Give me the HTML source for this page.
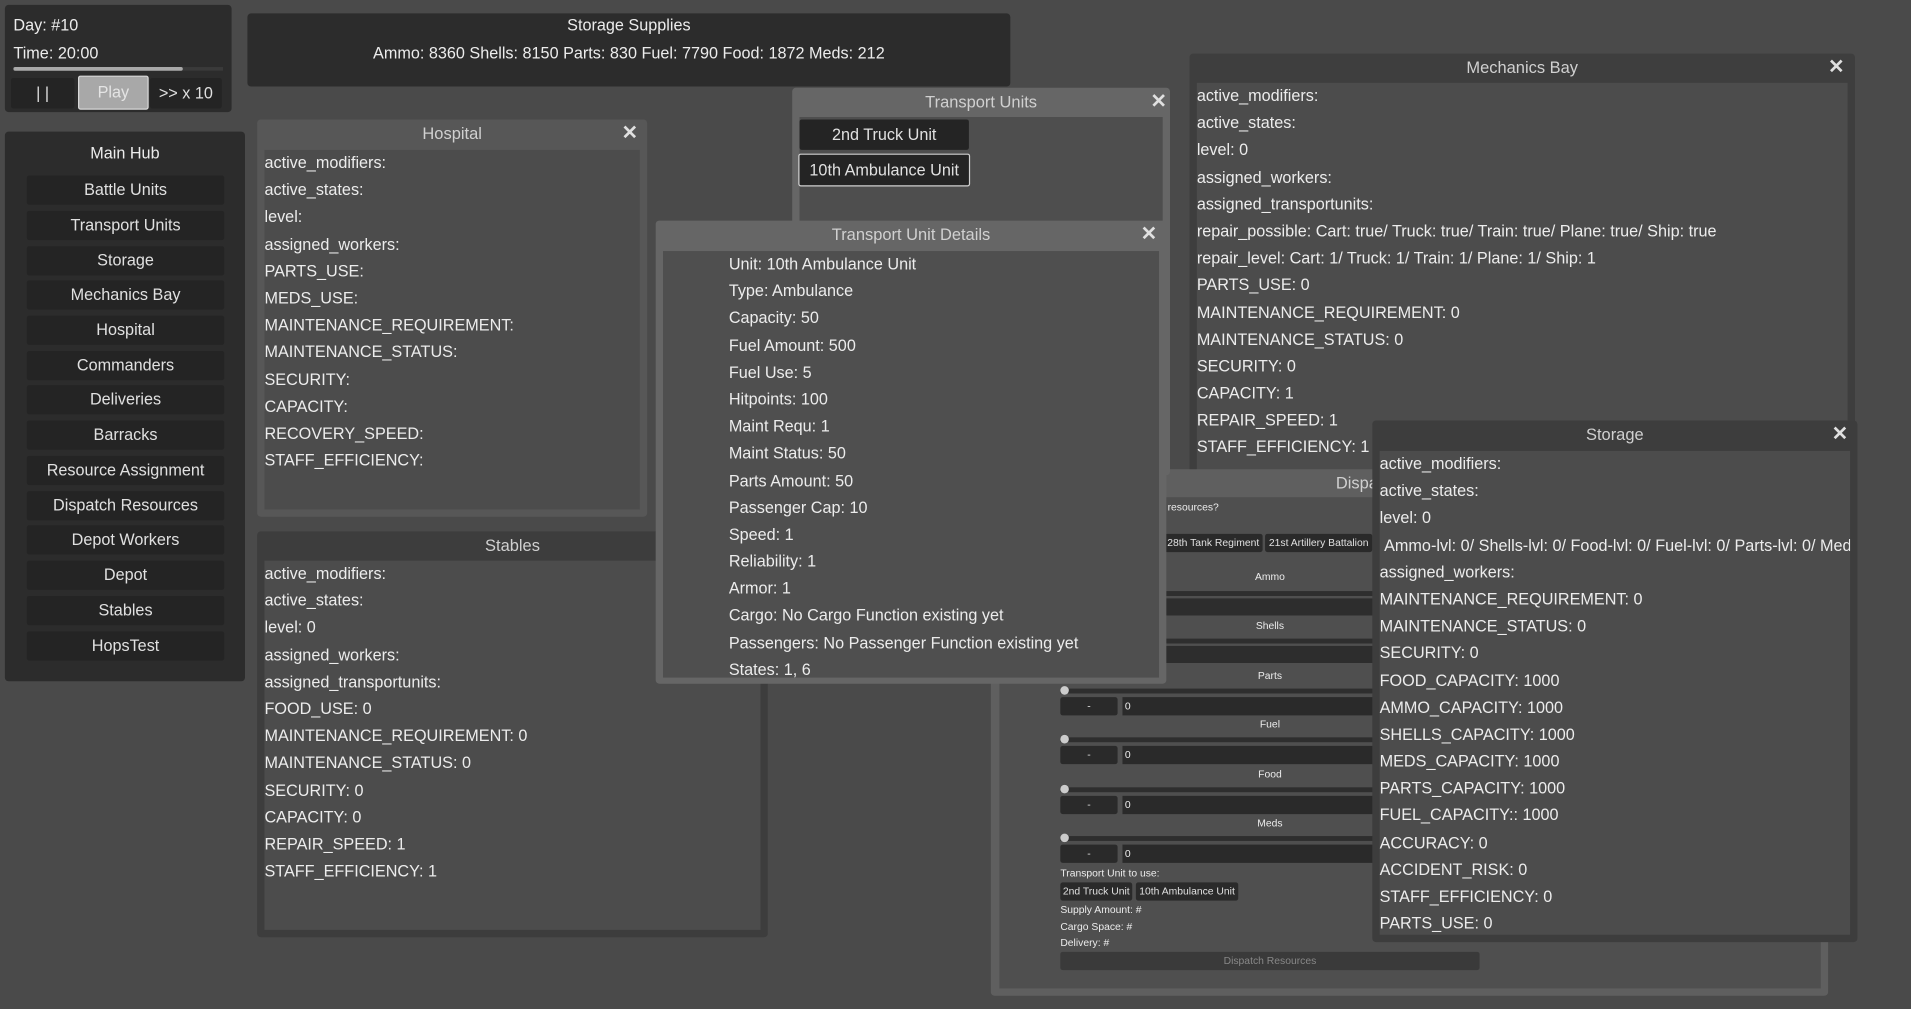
<!DOCTYPE html>
<html><head><meta charset="utf-8">
<style>
html,body{margin:0;padding:0;width:1911px;height:1009px;overflow:hidden;background:#4a4a4a;}
#root{position:absolute;left:0;top:0;width:1568px;height:828px;transform:scale(1.21875);transform-origin:0 0;font-family:"Liberation Sans",sans-serif;color:#ececec;font-size:13.3px;letter-spacing:0;}
.a{position:absolute;}
.dark{background:#2c2c2c;border-radius:3px;}
.win{position:absolute;border-radius:3px;overflow:hidden;}
.t{position:absolute;left:0;right:0;top:0;height:24px;line-height:24px;text-align:center;color:#d0d0d0;font-size:13.5px;}
.x{position:absolute;top:0;height:24px;line-height:24px;font-size:16px;color:#e0e0e0;font-weight:bold;}
.c{position:absolute;background:#4c4c4c;overflow:hidden;}
.c div{height:22.2px;line-height:22.2px;white-space:nowrap;}
.btn{position:absolute;background:#242424;border-radius:2px;text-align:center;color:#e0e0e0;}
.s{font-size:8.5px;letter-spacing:0;}
</style></head><body><div id="root">

<div class="a dark" style="left:4px;top:4px;width:186px;height:88px;"></div>
<div class="a" style="left:11px;top:12px;line-height:17px;">Day: #10</div>
<div class="a" style="left:11px;top:35px;line-height:17px;">Time: 20:00</div>
<div class="a" style="left:11px;top:55px;width:172px;height:3px;background:#3a3a3a;"></div>
<div class="a" style="left:11px;top:55px;width:139px;height:3px;background:#a9a9a9;border-radius:2px;"></div>
<div class="btn" style="left:9px;top:64px;width:52px;height:25px;line-height:25px;">| |</div>
<div class="btn" style="left:64px;top:62px;width:56px;height:26px;line-height:26px;background:#a8a8a8;border:1px solid #d8d8d8;color:#e4e4e4;">Play</div>
<div class="btn" style="left:123px;top:64px;width:59px;height:25px;line-height:25px;">&gt;&gt; x 10</div>

<div class="a dark" style="left:203px;top:11px;width:626px;height:60px;"></div>
<div class="a" style="left:203px;top:11px;width:626px;text-align:center;line-height:19px;">Storage Supplies</div>
<div class="a" style="left:203px;top:34px;width:626px;text-align:center;line-height:19px;">Ammo: 8360 Shells: 8150 Parts: 830 Fuel: 7790 Food: 1872 Meds: 212</div>

<div class="a dark" style="left:4px;top:108px;width:197px;height:451px;"></div>
<div class="a" style="left:4px;top:117px;width:197px;text-align:center;line-height:18px;">Main Hub</div>
<div class="btn" style="left:22px;top:144px;width:162px;height:24px;line-height:24px;">Battle Units</div>
<div class="btn" style="left:22px;top:173px;width:162px;height:24px;line-height:24px;">Transport Units</div>
<div class="btn" style="left:22px;top:202px;width:162px;height:24px;line-height:24px;">Storage</div>
<div class="btn" style="left:22px;top:230px;width:162px;height:24px;line-height:24px;">Mechanics Bay</div>
<div class="btn" style="left:22px;top:259px;width:162px;height:24px;line-height:24px;">Hospital</div>
<div class="btn" style="left:22px;top:288px;width:162px;height:24px;line-height:24px;">Commanders</div>
<div class="btn" style="left:22px;top:316px;width:162px;height:24px;line-height:24px;">Deliveries</div>
<div class="btn" style="left:22px;top:345px;width:162px;height:24px;line-height:24px;">Barracks</div>
<div class="btn" style="left:22px;top:374px;width:162px;height:24px;line-height:24px;">Resource Assignment</div>
<div class="btn" style="left:22px;top:403px;width:162px;height:24px;line-height:24px;">Dispatch Resources</div>
<div class="btn" style="left:22px;top:431px;width:162px;height:24px;line-height:24px;">Depot Workers</div>
<div class="btn" style="left:22px;top:460px;width:162px;height:24px;line-height:24px;">Depot</div>
<div class="btn" style="left:22px;top:489px;width:162px;height:24px;line-height:24px;">Stables</div>
<div class="btn" style="left:22px;top:518px;width:162px;height:24px;line-height:24px;">HopsTest</div>

<div class="win" style="left:211px;top:98px;width:320px;height:326px;background:#575757;">
<div class="t">Hospital</div><div class="x" style="left:299px;">✕</div>
<div class="c" style="left:6px;top:25px;right:6px;bottom:6px;">
<div>active_modifiers:</div><div>active_states:</div><div>level:</div><div>assigned_workers:</div><div>PARTS_USE:</div><div>MEDS_USE:</div><div>MAINTENANCE_REQUIREMENT:</div><div>MAINTENANCE_STATUS:</div><div>SECURITY:</div><div>CAPACITY:</div><div>RECOVERY_SPEED:</div><div>STAFF_EFFICIENCY:</div>
</div></div>

<div class="win" style="left:211px;top:436px;width:419px;height:333px;background:#3d3d3d;">
<div class="t">Stables</div>
<div class="c" style="left:6px;top:24px;right:6px;bottom:6px;">
<div>active_modifiers:</div><div>active_states:</div><div>level: 0</div><div>assigned_workers:</div><div>assigned_transportunits:</div><div>FOOD_USE: 0</div><div>MAINTENANCE_REQUIREMENT: 0</div><div>MAINTENANCE_STATUS: 0</div><div>SECURITY: 0</div><div>CAPACITY: 0</div><div>REPAIR_SPEED: 1</div><div>STAFF_EFFICIENCY: 1</div>
</div></div>

<div class="win" style="left:976px;top:44px;width:546px;height:345px;background:#3e3e3e;">
<div class="t">Mechanics Bay</div><div class="x" style="left:524px;">✕</div>
<div class="c" style="left:6px;top:24px;right:6px;bottom:0;">
<div>active_modifiers:</div><div>active_states:</div><div>level: 0</div><div>assigned_workers:</div><div>assigned_transportunits:</div><div>repair_possible: Cart: true/ Truck: true/ Train: true/ Plane: true/ Ship: true</div><div>repair_level: Cart: 1/ Truck: 1/ Train: 1/ Plane: 1/ Ship: 1</div><div>PARTS_USE: 0</div><div>MAINTENANCE_REQUIREMENT: 0</div><div>MAINTENANCE_STATUS: 0</div><div>SECURITY: 0</div><div>CAPACITY: 1</div><div>REPAIR_SPEED: 1</div><div>STAFF_EFFICIENCY: 1</div>
</div></div>

<div class="win" style="left:813px;top:385px;width:687px;height:432px;background:#5f5f5f;">
<div class="t" style="left:0;right:0;">Dispatch Resources</div>
<div class="c" style="left:7px;top:23px;right:6px;bottom:6px;background:#4f4f4f;"></div>
</div>
<div class="a s" style="left:958px;top:411px;">resources?</div>
<div class="btn s" style="left:955px;top:438px;width:81px;height:15px;line-height:15px;background:#2a2a2a;">28th Tank Regiment</div>
<div class="btn s" style="left:1038px;top:438px;width:88px;height:15px;line-height:15px;background:#2a2a2a;">21st Artillery Battalion</div>
<div class="a s" style="left:870px;top:468px;width:344px;text-align:center;">Ammo</div>
<div class="a" style="left:870px;top:485px;width:344px;height:4px;background:#2e2e2e;"></div>
<div class="a" style="left:870px;top:491px;width:344px;height:14px;background:#2d2d2d;"></div>
<div class="a s" style="left:870px;top:508px;width:344px;text-align:center;">Shells</div>
<div class="a" style="left:870px;top:524px;width:344px;height:4px;background:#2e2e2e;"></div>
<div class="a" style="left:870px;top:530px;width:344px;height:14px;background:#2d2d2d;"></div>
<div class="a s" style="left:870px;top:549px;width:344px;text-align:center;">Parts</div>
<div class="a" style="left:870px;top:565px;width:344px;height:4px;background:#2e2e2e;"></div><div class="a" style="left:870px;top:563px;width:7px;height:7px;border-radius:50%;background:#ccc;"></div>
<div class="btn s" style="left:870px;top:572px;width:47px;height:15px;line-height:15px;background:#2a2a2a;">-</div>
<div class="a s" style="left:921px;top:572px;width:293px;height:15px;line-height:15px;background:#2a2a2a;text-indent:2px;">0</div>
<div class="a s" style="left:870px;top:589px;width:344px;text-align:center;">Fuel</div>
<div class="a" style="left:870px;top:605px;width:344px;height:4px;background:#2e2e2e;"></div><div class="a" style="left:870px;top:603px;width:7px;height:7px;border-radius:50%;background:#ccc;"></div>
<div class="btn s" style="left:870px;top:612px;width:47px;height:15px;line-height:15px;background:#2a2a2a;">-</div>
<div class="a s" style="left:921px;top:612px;width:293px;height:15px;line-height:15px;background:#2a2a2a;text-indent:2px;">0</div>
<div class="a s" style="left:870px;top:630px;width:344px;text-align:center;">Food</div>
<div class="a" style="left:870px;top:646px;width:344px;height:4px;background:#2e2e2e;"></div><div class="a" style="left:870px;top:644px;width:7px;height:7px;border-radius:50%;background:#ccc;"></div>
<div class="btn s" style="left:870px;top:653px;width:47px;height:15px;line-height:15px;background:#2a2a2a;">-</div>
<div class="a s" style="left:921px;top:653px;width:293px;height:15px;line-height:15px;background:#2a2a2a;text-indent:2px;">0</div>
<div class="a s" style="left:870px;top:670px;width:344px;text-align:center;">Meds</div>
<div class="a" style="left:870px;top:686px;width:344px;height:4px;background:#2e2e2e;"></div><div class="a" style="left:870px;top:684px;width:7px;height:7px;border-radius:50%;background:#ccc;"></div>
<div class="btn s" style="left:870px;top:693px;width:47px;height:15px;line-height:15px;background:#2a2a2a;">-</div>
<div class="a s" style="left:921px;top:693px;width:293px;height:15px;line-height:15px;background:#2a2a2a;text-indent:2px;">0</div>
<div class="a s" style="left:870px;top:711px;">Transport Unit to use:</div>
<div class="btn s" style="left:870px;top:724px;width:59px;height:15px;line-height:15px;background:#2a2a2a;">2nd Truck Unit</div>
<div class="btn s" style="left:932px;top:724px;width:84px;height:15px;line-height:15px;background:#2a2a2a;">10th Ambulance Unit</div>
<div class="a s" style="left:870px;top:741px;">Supply Amount: #</div>
<div class="a s" style="left:870px;top:755px;">Cargo Space: #</div>
<div class="a s" style="left:870px;top:768px;">Delivery: #</div>
<div class="btn s" style="left:870px;top:781px;width:344px;height:15px;line-height:15px;background:#3a3a3a;color:#888;">Dispatch Resources</div>

<div class="win" style="left:650px;top:72px;width:310px;height:318px;background:#666;">
<div class="t">Transport Units</div><div class="x" style="left:294px;">✕</div>
<div class="c" style="left:6px;top:24px;right:6px;bottom:0;background:#4e4e4e;"></div>
</div>
<div class="btn" style="left:656px;top:98px;width:139px;height:25px;line-height:25px;">2nd Truck Unit</div>
<div class="btn" style="left:655px;top:126px;width:139px;height:25px;line-height:25px;border:1px solid #d0d0d0;">10th Ambulance Unit</div>

<div class="win" style="left:538px;top:181px;width:419px;height:380px;background:#666;">
<div class="t">Transport Unit Details</div><div class="x" style="left:398px;">✕</div>
<div class="c" style="left:6px;top:25px;right:6px;bottom:5px;background:#4f4f4f;padding-left:54px;">
<div>Unit: 10th Ambulance Unit</div><div>Type: Ambulance</div><div>Capacity: 50</div><div>Fuel Amount: 500</div><div>Fuel Use: 5</div><div>Hitpoints: 100</div><div>Maint Requ: 1</div><div>Maint Status: 50</div><div>Parts Amount: 50</div><div>Passenger Cap: 10</div><div>Speed: 1</div><div>Reliability: 1</div><div>Armor: 1</div><div>Cargo: No Cargo Function existing yet</div><div>Passengers: No Passenger Function existing yet</div><div>States: 1, 6</div>
</div></div>

<div class="win" style="left:1126px;top:345px;width:398px;height:428px;background:#3d3d3d;">
<div class="t">Storage</div><div class="x" style="left:377px;">✕</div>
<div class="c" style="left:6px;top:25px;right:6px;bottom:6px;">
<div>active_modifiers:</div><div>active_states:</div><div>level: 0</div><div>&nbsp;Ammo-lvl: 0/ Shells-lvl: 0/ Food-lvl: 0/ Fuel-lvl: 0/ Parts-lvl: 0/ Meds-lvl: 0</div><div>assigned_workers:</div><div>MAINTENANCE_REQUIREMENT: 0</div><div>MAINTENANCE_STATUS: 0</div><div>SECURITY: 0</div><div>FOOD_CAPACITY: 1000</div><div>AMMO_CAPACITY: 1000</div><div>SHELLS_CAPACITY: 1000</div><div>MEDS_CAPACITY: 1000</div><div>PARTS_CAPACITY: 1000</div><div>FUEL_CAPACITY:: 1000</div><div>ACCURACY: 0</div><div>ACCIDENT_RISK: 0</div><div>STAFF_EFFICIENCY: 0</div><div>PARTS_USE: 0</div>
</div></div>

</div></body></html>
